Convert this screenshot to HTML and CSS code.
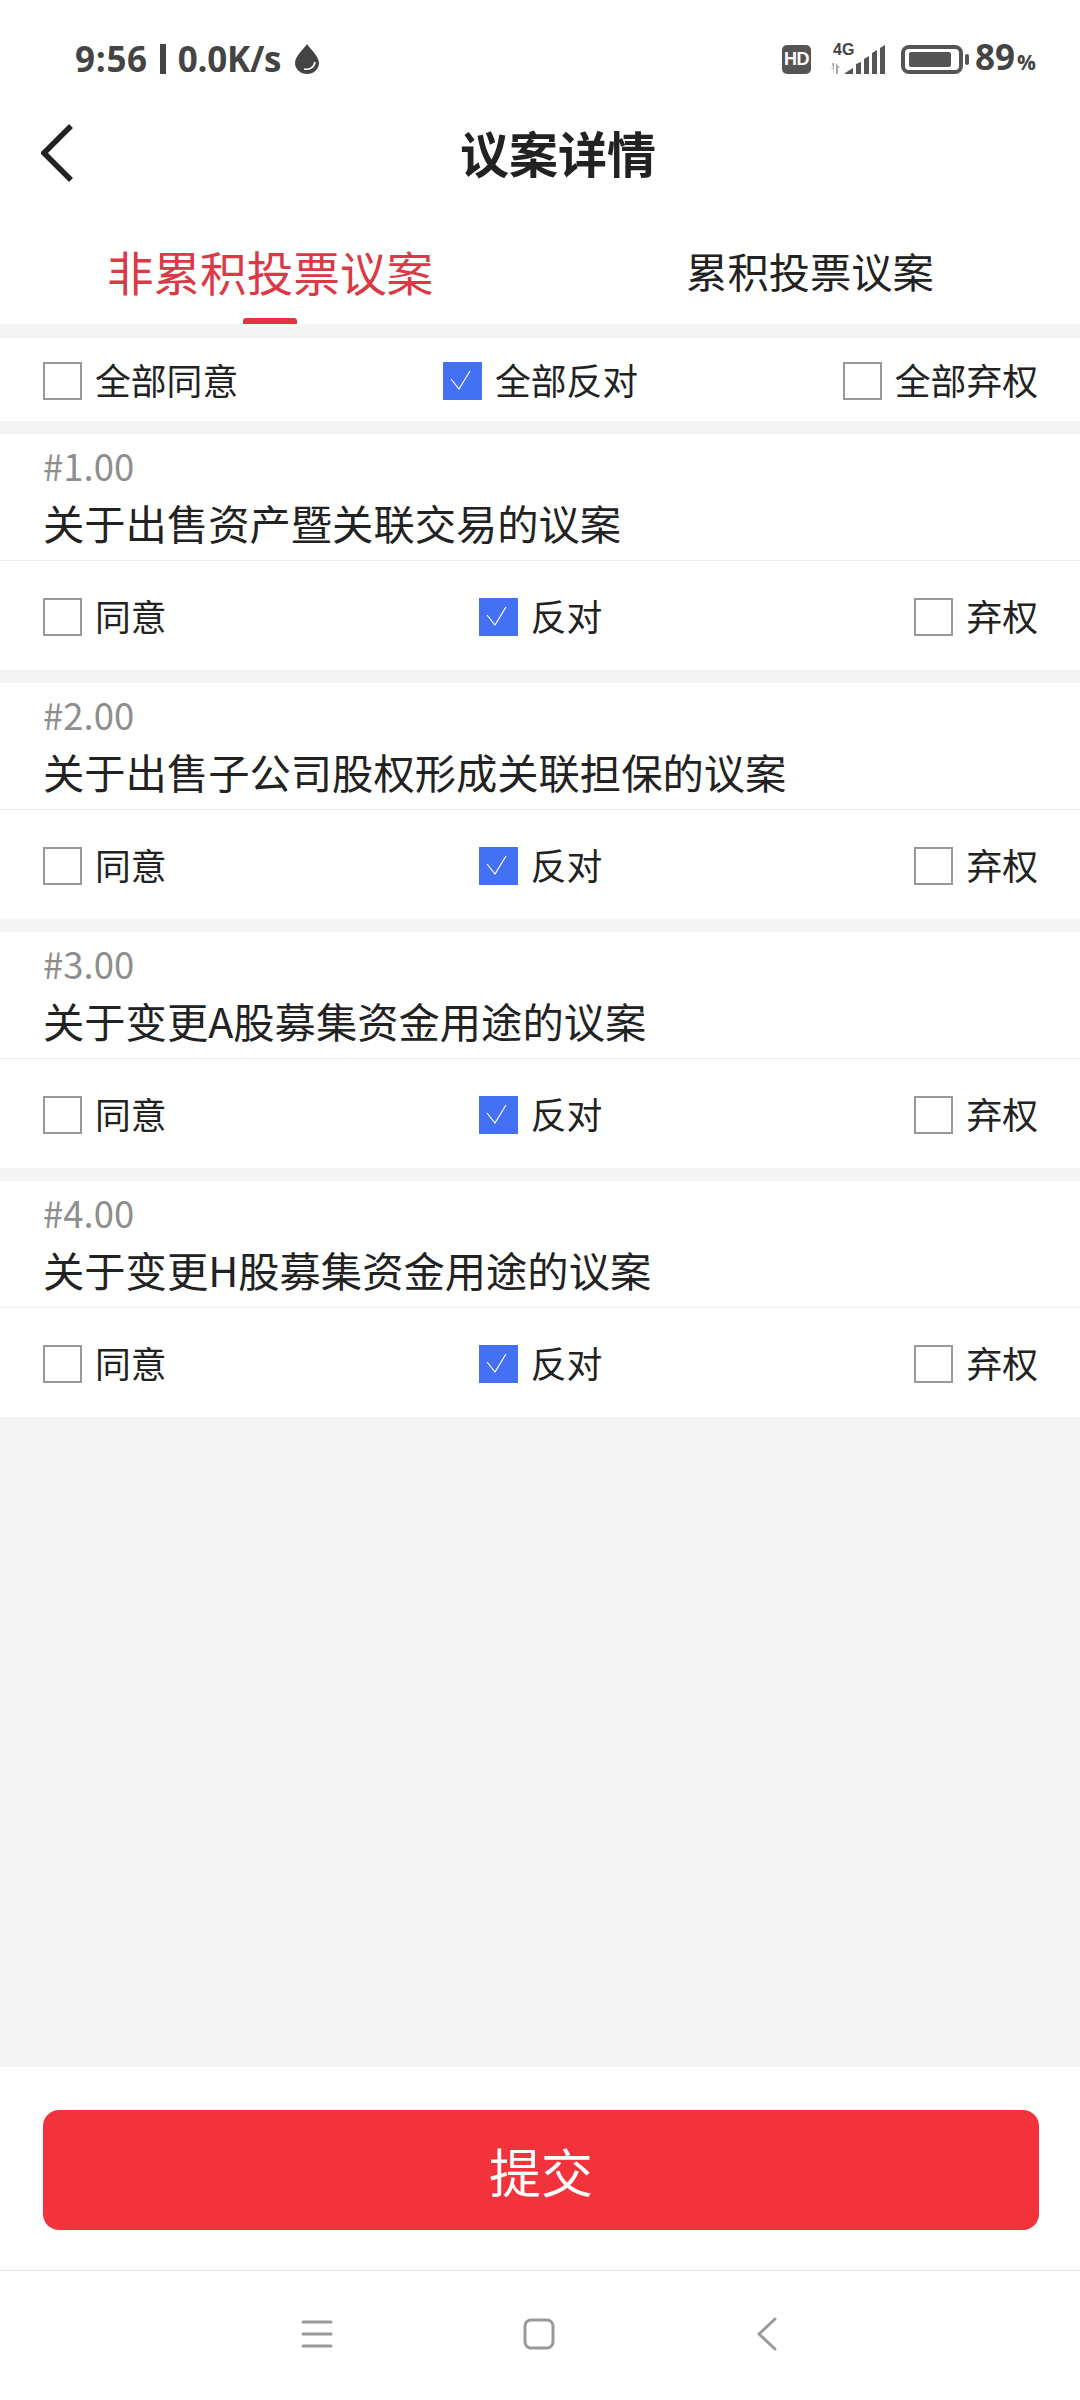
FILE: index.html
```html
<!DOCTYPE html>
<html lang="zh-CN">
<head>
<meta charset="utf-8">
<title>议案详情</title>
<link rel="stylesheet" href="styles.css">
</head>
<body>
<div class="screen">
  <header class="status">
    <div class="status-left">
      <span class="time">9:56</span>
      <span class="sep"></span>
      <span class="speed">0.0K/s</span>
      <svg class="drop" width="24" height="30" viewBox="0 0 24 30"><path d="M12 0C9 5 0 12 0 19a12 11 0 0 0 24 0C24 12 15 5 12 0Z" fill="#444"/><path d="M9 25c5 1 10-1 11-7" fill="none" stroke="#fff" stroke-width="1.6"/></svg>
    </div>
    <div class="status-right">
      <span class="hd">HD</span>
      <span class="signal">
        <svg width="56" height="29" viewBox="0 0 56 29">
          <path d="M3 18h2v11zM1 23h4v1zM7 18l0 11h2V23h2z" fill="#aaa"/>
          <path d="M16 29v-1l8-5v6zM27 29V19l5-2v12zM35 29V14l5-3v18zM43 29V8l5-3v24zM51 29V3l5-3v29z" fill="#555"/>
        </svg>
        <span class="lte">4G</span>
      </span>
      <svg class="battery" width="68" height="29" viewBox="0 0 68 29"><rect x="2" y="2" width="58" height="25" rx="6" fill="none" stroke="#555" stroke-width="4"/><rect x="8" y="7" width="42" height="15" rx="2" fill="#555"/><rect x="64" y="9" width="4" height="11" rx="2" fill="#555"/></svg>
      <span class="pct">89<small>%</small></span>
    </div>
  </header>

  <nav class="titlebar">
    <svg class="back" width="32" height="58" viewBox="0 0 32 58"><path d="M30 2L3 29l27 27" fill="none" stroke="#222" stroke-width="5.500"/></svg>
    <h1>议案详情</h1>
  </nav>

  <div class="tabs">
    <div class="tab active">非累积投票议案</div>
    <div class="tab">累积投票议案</div>
  </div>

  <main class="content">
    <section class="row-all">
      <label class="opt"><span class="box"></span>全部同意</label>
      <label class="opt"><span class="box on"><svg width="39" height="38" viewBox="0 0 39 38"><path d="M8 17l8 10L27 9" fill="none" stroke="#fff" stroke-width="1.200"/></svg></span>全部反对</label>
      <label class="opt"><span class="box"></span>全部弃权</label>
    </section>

    <section class="card">
      <div class="head">
        <div class="num">#1.00</div>
        <div class="name">关于出售资产暨关联交易的议案</div>
      </div>
      <div class="opts">
        <label class="opt"><span class="box"></span>同意</label>
        <label class="opt"><span class="box on"><svg width="39" height="38" viewBox="0 0 39 38"><path d="M8 17l8 10L27 9" fill="none" stroke="#fff" stroke-width="1.200"/></svg></span>反对</label>
        <label class="opt"><span class="box"></span>弃权</label>
      </div>
    </section>

    <section class="card">
      <div class="head">
        <div class="num">#2.00</div>
        <div class="name">关于出售子公司股权形成关联担保的议案</div>
      </div>
      <div class="opts">
        <label class="opt"><span class="box"></span>同意</label>
        <label class="opt"><span class="box on"><svg width="39" height="38" viewBox="0 0 39 38"><path d="M8 17l8 10L27 9" fill="none" stroke="#fff" stroke-width="1.200"/></svg></span>反对</label>
        <label class="opt"><span class="box"></span>弃权</label>
      </div>
    </section>

    <section class="card">
      <div class="head">
        <div class="num">#3.00</div>
        <div class="name">关于变更A股募集资金用途的议案</div>
      </div>
      <div class="opts">
        <label class="opt"><span class="box"></span>同意</label>
        <label class="opt"><span class="box on"><svg width="39" height="38" viewBox="0 0 39 38"><path d="M8 17l8 10L27 9" fill="none" stroke="#fff" stroke-width="1.200"/></svg></span>反对</label>
        <label class="opt"><span class="box"></span>弃权</label>
      </div>
    </section>

    <section class="card">
      <div class="head">
        <div class="num">#4.00</div>
        <div class="name">关于变更H股募集资金用途的议案</div>
      </div>
      <div class="opts">
        <label class="opt"><span class="box"></span>同意</label>
        <label class="opt"><span class="box on"><svg width="39" height="38" viewBox="0 0 39 38"><path d="M8 17l8 10L27 9" fill="none" stroke="#fff" stroke-width="1.200"/></svg></span>反对</label>
        <label class="opt"><span class="box"></span>弃权</label>
      </div>
    </section>
  </main>

  <footer class="actions">
    <button class="submit" type="button">提交</button>
  </footer>

  <div class="sysnav">
    <svg width="32" height="30" viewBox="0 0 32 30"><path d="M2 3h28M2 15h28M2 27h28" stroke="#999" stroke-width="3" stroke-linecap="round"/></svg>
    <svg class="nav-home" width="32" height="32" viewBox="0 0 32 32"><rect x="2" y="2" width="28" height="28" rx="6" fill="none" stroke="#999" stroke-width="3"/></svg>
    <svg class="nav-back" width="20" height="34" viewBox="0 0 20 34"><path d="M18 2L2 17l16 15" fill="none" stroke="#999" stroke-width="3" stroke-linecap="round" stroke-linejoin="round"/></svg>
  </div>
</div>
</body>
</html>
```
FILE: styles.css
```css
* { box-sizing: border-box; }
html, body { margin: 0; padding: 0; }
body { font-family: "Noto Sans CJK SC", "Noto Sans", sans-serif; color: #222; background: #fff; }
.screen { width: 1080px; height: 2400px; display: flex; flex-direction: column; background: #fff; overflow: hidden; }

.status { height: 118px; flex: none; display: flex; justify-content: space-between; align-items: flex-start; padding: 44px 44px 0 75px; color: #444; }
.status-left, .status-right { display: flex; align-items: center; height: 30px; }
.time, .speed, .pct { font-family: "Open Sans", sans-serif; font-weight: 700; font-size: 35px; line-height: 30px; }
.time { letter-spacing: 0.7px; }
.speed { letter-spacing: -0.3px; }
.sep { width: 6px; height: 30px; margin: 0 12px; background: #444; }
.drop { margin-left: 14px; }
.hd { width: 29px; height: 29px; border-radius: 5px; background: #555; color: #fff; font: 700 18px/29px "Liberation Sans", sans-serif; text-align: center; letter-spacing: -0.5px; }
.signal { position: relative; margin-left: 18px; display: block; height: 29px; }
.lte { position: absolute; left: 4px; top: -1px; font: 700 16px/12px "Liberation Sans", sans-serif; color: #444; }
.battery { margin-left: 16px; }
.pct { margin-left: 6px; }
.pct small { font-size: 21px; margin-left: 2px; }

.titlebar { height: 70px; flex: none; display: flex; align-items: center; justify-content: center; position: relative; padding-left: 36px; }
.back { position: absolute; left: 41px; top: 6px; }
.titlebar h1 { margin: 0 0 2px; font-size: 49px; font-weight: 700; color: #222; line-height: 68px; }

.tabs { height: 136px; flex: none; display: grid; grid-template-columns: 1fr 1fr; }
.tab { display: flex; align-items: center; justify-content: center; font-size: 41.300px; padding-top: 28px; height: 100%; color: #222; position: relative; }
.tab.active { font-size: 46.600px; color: #d93a45; }
.tab.active::after { content: ""; position: absolute; left: 243px; bottom: 0; width: 54px; height: 6px; border-radius: 3px 3px 0 0; background: #e5323f; }

.content { flex: 1; background: #f4f4f4; padding-top: 14px; }
.row-all { height: 83px; background: #fff; display: flex; justify-content: space-between; align-items: center; padding: 0 42px 2px 43px; margin-bottom: 13px; }
.card { height: 236px; background: #fff; margin-bottom: 13px; }
.head { height: 127px; padding: 6px 43px 0; border-bottom: 1px solid #eee; }
.num { font-size: 36.500px; line-height: 52px; color: #8e8e8e; }
.name { margin-top: 1px; font-size: 41.300px; line-height: 58px; color: #222; white-space: nowrap; }
.opts { height: 109px; display: flex; justify-content: space-between; align-items: center; padding: 0 42px 2px 43px; }
.opt { display: flex; align-items: center; gap: 13px; font-size: 35.800px; line-height: 40px; color: #222; }
.box { width: 39px; height: 38px; flex: none; margin-top: 4px; border: 2px solid #999; background: #fff; display: flex; align-items: center; justify-content: center; }
.box.on { border: 0; background: #4470f4; }

.actions { height: 204px; flex: none; background: #fff; padding: 43px 41px 0 43px; border-bottom: 1px solid #e4e4e4; }
.submit { display: block; width: 100%; height: 120px; border: 0; border-radius: 16px; background: #f2333c; color: #fff; font-family: inherit; font-size: 52px; }

.sysnav { height: 129px; flex: none; display: flex; align-items: center; padding-left: 301px; padding-bottom: 3px; }
.nav-home { margin-left: 190px; }
.nav-back { margin-left: 202px; }
```
